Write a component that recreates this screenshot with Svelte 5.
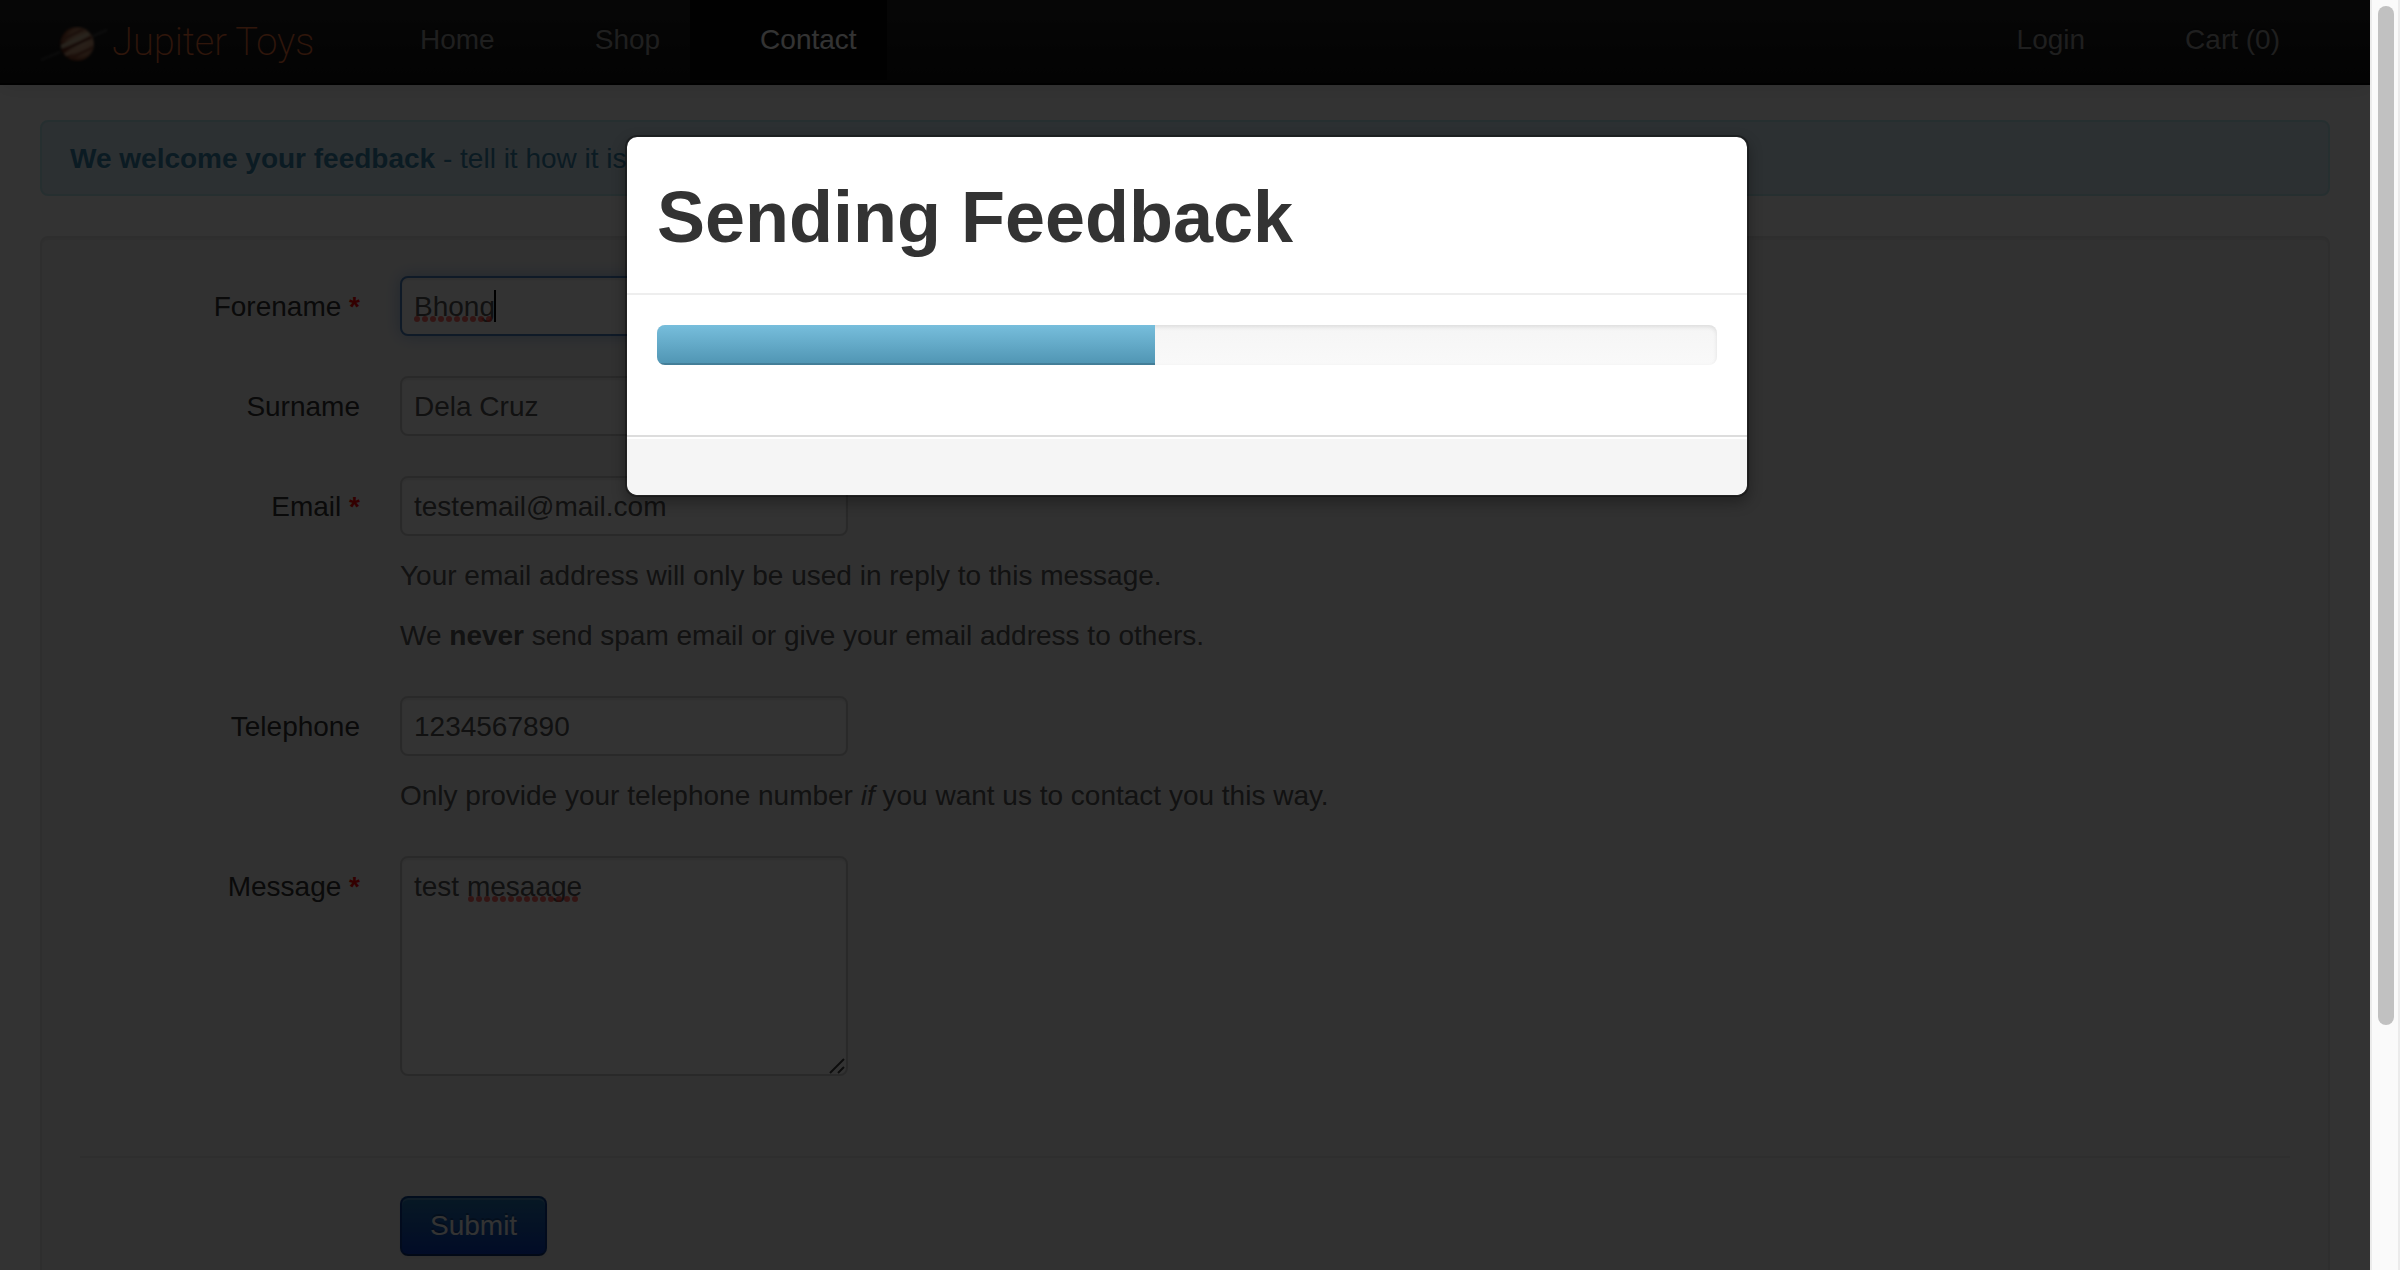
<script>
  const navLinks = [
    { label: 'Home', active: false },
    { label: 'Shop', active: false },
    { label: 'Contact', active: true }
  ];
  const userLinks = ['Login', 'Cart (0)'];

  let forename = $state('Bhong');
  let surname = $state('Dela Cruz');
  let email = $state('testemail@mail.com');
  let telephone = $state('1234567890');
  let message = $state('test mesaage');
  let progress = $state(47);
</script>

{#snippet squiggle(count)}
  <svg width={count * 8} height="6" aria-hidden="true">
    {#each Array(count) as _, i}
      <circle cx={i * 8 + 3} cy="3" r="3" fill="#ff3b30" fill-opacity="0.75" />
    {/each}
  </svg>
{/snippet}

<div class="window">
  <div class="page">
    <header class="navbar">
      <a class="brand" href="#/home">
        <svg class="planet" viewBox="0 0 68 36" aria-hidden="true">
          <defs>
            <radialGradient id="globe" cx="0.6" cy="0.45" r="0.6">
              <stop offset="0" stop-color="#d8b494" />
              <stop offset="0.6" stop-color="#b98868" />
              <stop offset="0.85" stop-color="#8a4428" />
              <stop offset="1" stop-color="#4a1c0e" />
            </radialGradient>
            <clipPath id="disc"><circle cx="37" cy="18" r="16" /></clipPath>
            <filter id="soft"><feGaussianBlur stdDeviation="1.2" /></filter>
          </defs>
          <g filter="url(#soft)">
            <path d="M1 34 L20 26" stroke="#555" stroke-width="2" opacity="0.6" />
            <circle cx="37" cy="18" r="17" fill="url(#globe)" />
            <g clip-path="url(#disc)" fill="none">
              <path d="M18 16 L52 -1" stroke="#8a5038" stroke-width="3" />
              <path d="M19 22 L56 4" stroke="#c8b494" stroke-width="3" />
              <path d="M20 26 L56 9" stroke="#6a2c1c" stroke-width="3" />
              <path d="M20 31 L58 14" stroke="#c89878" stroke-width="3" />
              <path d="M22 36 L58 19" stroke="#8a4a30" stroke-width="3" />
            </g>
            <path d="M53 10 L67 4" stroke="#555" stroke-width="2" opacity="0.7" />
          </g>
        </svg>
        <span>Jupiter Toys</span>
      </a>
      <nav class="links">
        {#each navLinks as link}
          <a class:active={link.active} href="#/{link.label.toLowerCase()}">{link.label}</a>
        {/each}
      </nav>
      <nav class="links user">
        {#each userLinks as label}
          <a href="#/{label.split(' ')[0].toLowerCase()}">{label}</a>
        {/each}
      </nav>
    </header>

    <main>
      <div class="alert"><strong>We welcome your feedback</strong> - tell it how it is.</div>

      <form class="well" onsubmit={(e) => e.preventDefault()}>
        <div class="group">
          <label for="forename">Forename <span class="req">*</span></label>
          <div class="controls">
            <div class="field">
              <input id="forename" class="focused" type="text" spellcheck="false" bind:value={forename} />
              <div class="marks"><span class="word">{@render squiggle(10)}</span><span class="caret"></span></div>
            </div>
          </div>
        </div>
        <div class="group">
          <label for="surname">Surname</label>
          <div class="controls">
            <input id="surname" type="text" bind:value={surname} />
          </div>
        </div>
        <div class="group">
          <label for="email">Email <span class="req">*</span></label>
          <div class="controls">
            <input id="email" type="email" bind:value={email} />
            <p>Your email address will only be used in reply to this message.</p>
            <p>We <strong>never</strong> send spam email or give your email address to others.</p>
          </div>
        </div>
        <div class="group">
          <label for="telephone">Telephone</label>
          <div class="controls">
            <input id="telephone" type="tel" bind:value={telephone} />
            <p>Only provide your telephone number <em>if</em> you want us to contact you this way.</p>
          </div>
        </div>
        <div class="group">
          <label for="message">Message <span class="req">*</span></label>
          <div class="controls">
            <div class="field">
              <textarea id="message" spellcheck="false" bind:value={message}></textarea>
              <div class="marks second"><span class="word">{@render squiggle(14)}</span></div>
              <svg class="grip" width="16" height="16" viewBox="0 0 16 16" aria-hidden="true">
                <path d="M1 15 L15 1 M9 15 L15 9" stroke="#444" stroke-width="2" fill="none" />
              </svg>
            </div>
          </div>
        </div>
        <div class="actions">
          <button class="submit" type="submit">Submit</button>
        </div>
      </form>
    </main>

    <div class="backdrop">
      <div class="modal" role="dialog" aria-modal="true" aria-labelledby="modal-title">
        <div class="modal-header"><h1 id="modal-title">Sending Feedback</h1></div>
        <div class="modal-body">
          <div class="progress" role="progressbar" aria-label="Sending" aria-valuenow={progress} aria-valuemin="0" aria-valuemax="100">
            <div class="bar" style="width: {progress}%"></div>
          </div>
        </div>
        <div class="modal-footer"></div>
      </div>
    </div>
  </div>

  <div class="scrollbar" aria-hidden="true"><div class="thumb"></div></div>
</div>

<style>
  :global(body) {
    background: #fff;
  }
  .window {
    display: flex;
    height: 100vh;
    overflow: hidden;
    color: #333;
    font: 28px/40px 'Helvetica Neue', 'Liberation Sans', Arial, sans-serif;
  }
  .page {
    position: relative;
    flex: 1;
    min-width: 0;
    overflow: hidden;
  }

  .navbar {
    display: flex;
    align-items: flex-start;
    box-sizing: border-box;
    height: 85px;
    padding: 0 60px 0 40px;
    border-bottom: 2px solid #000;
    background: linear-gradient(#222, #111);
    box-shadow: 0 2px 20px rgba(0, 0, 0, 0.1);
  }
  .brand {
    display: flex;
    align-items: center;
    box-sizing: border-box;
    width: 310px;
    height: 84px;
    gap: 4px;
    color: #ee7038;
    font: 200 38px/40px Roboto, 'Liberation Sans', sans-serif;
    text-decoration: none;
    white-space: nowrap;
  }
  .planet {
    flex: none;
    width: 68px;
    height: 36px;
    margin-top: 4px;
  }
  .links {
    display: flex;
  }
  .links a {
    height: 40px;
    padding: 20px 30px 20px 70px;
    color: #999;
    text-decoration: none;
    text-shadow: 0 -2px 0 rgba(0, 0, 0, 0.25);
    white-space: nowrap;
  }
  .links a.active {
    background: #080808;
    color: #fff;
  }
  .user {
    margin-left: auto;
  }

  main {
    padding: 35px 40px 0;
  }
  .alert {
    padding: 17px 70px 15px 28px;
    border: 2px solid #bce8f1;
    border-radius: 8px;
    background: #d9edf7;
    color: #3a87ad;
    text-shadow: 0 2px 0 rgba(255, 255, 255, 0.5);
  }
  .well {
    margin-top: 40px;
    padding: 38px;
    border: 2px solid #e3e3e3;
    border-radius: 8px;
    background: #f5f5f5;
    box-shadow: inset 0 2px 2px rgba(0, 0, 0, 0.05);
  }
  .group {
    display: flex;
    gap: 40px;
    margin-bottom: 40px;
  }
  label {
    flex: none;
    width: 280px;
    padding-top: 11px;
    text-align: right;
  }
  .req {
    color: #f00;
    font-weight: bold;
  }
  .controls {
    flex: 1;
    color: #595959;
  }
  .controls p {
    margin: 20px 0 0;
  }
  .field {
    position: relative;
    width: 448px;
  }
  input,
  textarea {
    display: block;
    box-sizing: border-box;
    width: 448px;
    height: 60px;
    margin: 0;
    padding: 9px 12px 7px;
    border: 2px solid #ccc;
    border-radius: 8px;
    outline: 0;
    background: #fff;
    box-shadow: inset 0 2px 2px rgba(0, 0, 0, 0.075);
    color: #555;
    font: inherit;
  }
  textarea {
    height: 220px;
    resize: none;
  }
  input.focused {
    border-color: #4a80c0;
    box-shadow: inset 0 2px 2px rgba(0, 0, 0, 0.075), 0 0 16px rgba(82, 140, 220, 0.5);
  }
  .marks {
    position: absolute;
    top: 14px;
    left: 14px;
    display: flex;
    align-items: flex-end;
    height: 32px;
    pointer-events: none;
  }
  .marks.second {
    left: 68px;
  }
  .word {
    display: flex;
  }
  .caret {
    width: 2px;
    height: 32px;
    background: #000;
  }
  .grip {
    position: absolute;
    right: 3px;
    bottom: 2px;
  }
  .actions {
    margin-top: 80px;
    padding: 38px 0 40px 320px;
    border-top: 2px solid #e5e5e5;
  }
  .submit {
    display: block;
    padding: 8px 28px;
    border: 2px solid;
    border-color: #0a4490 #0a3a90 #0a3070;
    border-radius: 8px;
    background: linear-gradient(#2478b4, #0a3cc0);
    box-shadow: inset 0 2px 0 rgba(255, 255, 255, 0.2), 0 2px 4px rgba(0, 0, 0, 0.05);
    color: #fff;
    font: inherit;
    text-shadow: 0 -2px 0 rgba(0, 0, 0, 0.25);
  }

  .backdrop {
    position: absolute;
    inset: 0;
    padding-top: 135px;
    background: rgba(0, 0, 0, 0.8);
  }
  .modal {
    width: 1120px;
    margin-left: calc(50% - 560px);
    border: 2px solid rgba(0, 0, 0, 0.3);
    border-radius: 12px;
    background: #fff;
    background-clip: padding-box;
    box-shadow: 0 6px 14px rgba(0, 0, 0, 0.3);
  }
  .modal-header {
    padding: 20px 30px 16px;
    border-bottom: 2px solid #eee;
  }
  h1 {
    margin: 20px 0;
    font-size: 72px;
    line-height: 80px;
  }
  .modal-body {
    padding: 30px;
  }
  .progress {
    height: 40px;
    margin-bottom: 40px;
    overflow: hidden;
    border-radius: 8px;
    background: linear-gradient(#f5f5f5, #f9f9f9);
    box-shadow: inset 0 2px 4px rgba(0, 0, 0, 0.1);
  }
  .bar {
    height: 100%;
    background: linear-gradient(#77bedc, #4f94b2);
    box-shadow: inset 0 -2px 0 rgba(0, 0, 0, 0.15);
  }
  .modal-footer {
    padding: 28px 30px 30px;
    border-top: 2px solid #ddd;
    border-radius: 0 0 12px 12px;
    background: #f5f5f5;
    box-shadow: inset 0 2px 0 #fff;
  }

  .scrollbar {
    flex: none;
    box-sizing: border-box;
    width: 30px;
    padding: 6px 4px 6px 6px;
    border: solid #ebebeb;
    border-width: 0 2px;
    background: #fafafa;
  }
  .thumb {
    height: 81%;
    border-radius: 8px;
    background: #c1c1c1;
  }
</style>
